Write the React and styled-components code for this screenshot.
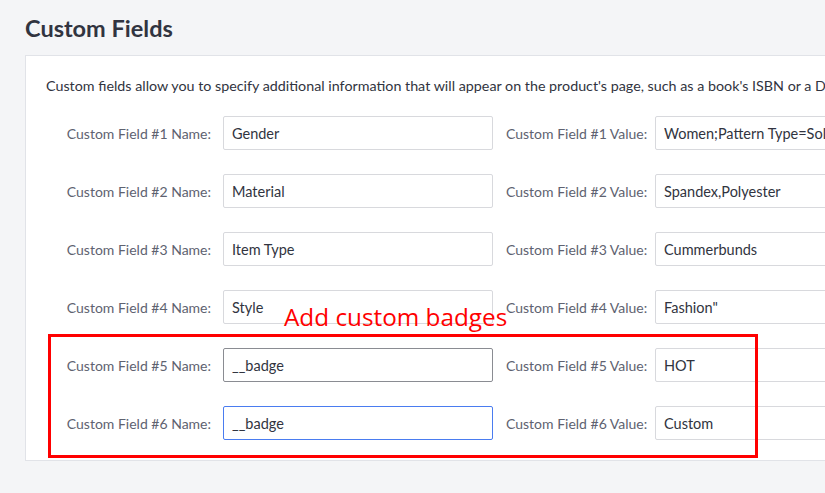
import React from 'react'
import styled, { createGlobalStyle } from 'styled-components'

const GlobalStyle = createGlobalStyle`
  html, body {
    margin: 0;
    padding: 0;
    background: #f4f5f7;
    overflow: hidden;
  }
  body {
    font-family: "Source Sans Pro", Lato, "Open Sans", sans-serif;
  }
`

const Page = styled.div`
  position: relative;
  width: 825px;
  height: 493px;
  padding: 14px 0 0 25px;
  box-sizing: border-box;
  overflow: hidden;
`

const Title = styled.h2`
  margin: 0 0 13px;
  font-size: 23.5px;
  font-weight: 700;
  color: #313440;
  line-height: 28px;
`

const Panel = styled.div`
  width: 1000px;
  height: 406px;
  box-sizing: border-box;
  background: #fff;
  border: 1px solid #e1e3e8;
  padding: 20px 20px 0 20px;
`

const Description = styled.p`
  margin: 0 0 20px;
  font-size: 14.3px;
  line-height: 20px;
  color: #313440;
  white-space: nowrap;
`

const Rows = styled.div`
  display: flex;
  flex-direction: column;
  gap: 24px;
`

const Row = styled.div`
  display: flex;
  align-items: center;
  height: 34px;
`

const Label = styled.label`
  width: ${p => p.$width}px;
  flex: none;
  text-align: right;
  padding-right: ${p => p.$pad}px;
  box-sizing: border-box;
  font-size: 14px;
  color: #5e6270;
  white-space: nowrap;
`

const Input = styled.input`
  flex: none;
  width: 270px;
  height: 34px;
  box-sizing: border-box;
  padding: 0 8px;
  margin-right: ${p => p.$gap || 0}px;
  border: 1px solid ${p => p.$state === 'hover' ? '#8a8c92' : p.$state === 'focus' ? '#4a7cf0' : '#d8d9dd'};
  border-radius: 2px;
  font-family: inherit;
  font-size: 14.5px;
  color: #313440;
  background: #fff;
  outline: none;
`

const Callout = styled.div`
  position: absolute;
  left: 48px;
  top: 334px;
  width: 710px;
  height: 124px;
  box-sizing: border-box;
  border: 3px solid #ff0000;
  pointer-events: none;
`

const CalloutText = styled.span`
  position: absolute;
  left: 284px;
  top: 300px;
  font-family: "Open Sans", "Noto Sans", sans-serif;
  font-size: 24.3px;
  line-height: 33px;
  color: #ff0000;
  white-space: nowrap;
`

const fields = [
  { name: 'Gender', value: 'Women;Pattern Type=Solid' },
  { name: 'Material', value: 'Spandex,Polyester' },
  { name: 'Item Type', value: 'Cummerbunds' },
  { name: 'Style', value: 'Fashion"' },
  { name: '__badge', value: 'HOT', state: 'hover' },
  { name: '__badge', value: 'Custom', state: 'focus' },
]

export default function App() {
  return (
    <Page>
      <GlobalStyle />
      <Title>Custom Fields</Title>
      <Panel>
        <Description>
          Custom fields allow you to specify additional information that will appear on the product's page, such as a book's ISBN or a DVD's rating.
        </Description>
        <Rows>
          {fields.map((f, i) => (
            <Row key={i}>
              <Label $width={177} $pad={12}>Custom Field #{i + 1} Name:</Label>
              <Input readOnly value={f.name} $state={f.state} $gap={13} />
              <Label $width={149} $pad={8}>Custom Field #{i + 1} Value:</Label>
              <Input readOnly value={f.value} />
            </Row>
          ))}
        </Rows>
      </Panel>
      <Callout />
      <CalloutText>Add custom badges</CalloutText>
    </Page>
  )
}
